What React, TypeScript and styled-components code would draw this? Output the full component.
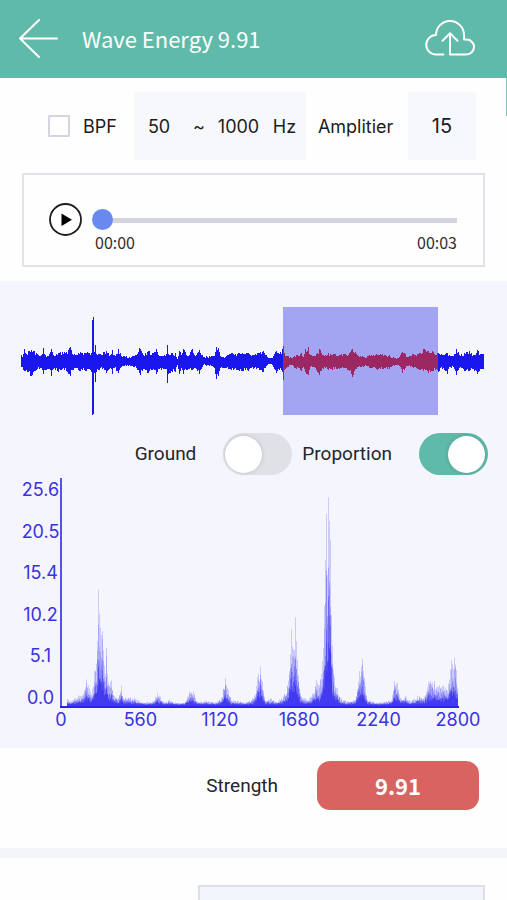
import React from "react";
import styled, { createGlobalStyle } from "styled-components";

const uiFont = `Inter, "Liberation Sans", sans-serif`;
const labelFont = `Roboto, "Liberation Sans", sans-serif`;
const titleFont = `"Noto Sans CJK SC", "Noto Sans", sans-serif`;

const GlobalStyle = createGlobalStyle`
  *, *::before, *::after { box-sizing: border-box; }
  body { margin: 0; background: #fefefe; color: #1c1c20; font-family: ${uiFont}; }
  input, button { font: inherit; color: inherit; margin: 0; }
`;

const Page = styled.div`
  position: relative;
  display: flex;
  flex-direction: column;
  min-height: 100vh;
`;

const Header = styled.header`
  display: flex;
  align-items: center;
  height: 78px;
  padding: 0 32px 0 19px;
  background: #5fbaa9;
  color: #fff;
`;

const IconButton = styled.button`
  display: flex;
  padding: 0;
  border: 0;
  background: none;
  cursor: pointer;
`;

const Title = styled.h1`
  flex: 1;
  margin: 0 0 2px 24px;
  font: 400 22px/32px ${titleFont};
`;

const ScrollMark = styled.div`
  position: absolute;
  top: 78px;
  right: 0;
  width: 1px;
  height: 38px;
  background: #7cc9b9;
`;

const Panel = styled.section<{ $tinted?: boolean }>`
  background: ${(p) => (p.$tinted ? "#f4f5fd" : "#fefefe")};
`;

const FilterRow = styled.div`
  display: flex;
  align-items: center;
  padding: 14px 31px 13px 48px;
  font-size: 18px;
`;

const CheckLabel = styled.label`
  display: flex;
  align-items: center;
  gap: 13px;
`;

const CheckBox = styled.input`
  appearance: none;
  width: 22px;
  height: 22px;
  border: 2px solid #d6d4e0;
  border-radius: 1px;
  background: #fff;
  &:checked { background: #5fbaa9; }
`;

const RangeBox = styled.div`
  display: flex;
  align-items: center;
  width: 172px;
  height: 68px;
  margin-left: 17px;
  padding: 0 10px 0 14px;
  background: #f6f8fc;
`;

const NumberField = styled.input<{ $width: number }>`
  width: ${(p) => p.$width}px;
  padding: 0;
  border: 0;
  outline: 0;
  background: none;
`;

const Unit = styled.span<{ $gap: number }>`
  margin-right: ${(p) => p.$gap}px;
`;

const AmpLabel = styled.label`
  margin-left: 12px;
`;

const AmpField = styled.input`
  width: 68px;
  height: 68px;
  margin-left: auto;
  padding: 0;
  border: 0;
  background: #f6f8fc;
  text-align: center;
  && { font-size: 20px; }
`;

const PlayerWrap = styled.div`
  padding: 0 22px 14px;
`;

const Player = styled.div`
  display: flex;
  align-items: flex-start;
  gap: 10px;
  height: 94px;
  padding: 28px 26px 0 25px;
  border: 2px solid #e2e3e9;
`;

const Track = styled.div`
  flex: 1;
  min-width: 0;
`;

const Slider = styled.input`
  appearance: none;
  display: block;
  width: 100%;
  height: 21px;
  margin-top: 6px !important;
  background: linear-gradient(#d3d4e0, #d3d4e0) center / 100% 5px no-repeat;
  background-position: 10px 9px;
  &::-webkit-slider-thumb {
    appearance: none;
    width: 21px;
    height: 21px;
    border-radius: 50%;
    background: #6989f1;
  }
`;

const Times = styled.div`
  display: flex;
  justify-content: space-between;
  padding-left: 3px;
  color: #2e2e32;
  font: 400 16px/24px ${titleFont};
`;

const WaveWrap = styled.div`
  padding: 26px 22px 0 21px;
`;

const WaveSvg = styled.svg`
  display: block;
  width: 100%;
  height: 108px;
`;

const SwitchRow = styled.div`
  display: flex;
  justify-content: flex-end;
  gap: 10px;
  padding: 18px 19px 0;
`;

const SwitchLabel = styled.label`
  display: flex;
  align-items: center;
  gap: 27px;
  color: #25252a;
  font: 400 19px/42px ${labelFont};
`;

const Switch = styled.input`
  appearance: none;
  display: flex;
  align-items: center;
  width: 69px;
  height: 42px;
  padding: 0 3px 0 2px;
  border-radius: 21px;
  background: #e0e1e6;
  cursor: pointer;
  &::before {
    content: "";
    width: 37px;
    height: 37px;
    border-radius: 50%;
    background: #fff;
    box-shadow: 0 0 4px rgba(0, 0, 0, 0.16);
  }
  &:checked { justify-content: flex-end; background: #5fbaa9; }
`;

const Chart = styled.figure`
  display: grid;
  grid-template-columns: 39px 1fr;
  margin: 0;
  padding: 3px 48px 18px 21px;
  color: #3a32dc;
  font-size: 18px;
`;

const YLabels = styled.div`
  display: flex;
  flex-direction: column;
  align-items: center;
  justify-content: space-between;
  height: 230px;
  padding-top: 2px;
  line-height: 20px;
`;

const PlotSvg = styled.svg`
  display: block;
  width: 100%;
  height: 230px;
`;

const XLabels = styled.div`
  grid-column: 2;
  display: flex;
  justify-content: space-between;
  height: 22px;
  line-height: 24px;
`;

const Tick = styled.span`
  display: flex;
  justify-content: center;
  width: 2px;
`;

const StrengthRow = styled.div`
  display: flex;
  align-items: center;
  justify-content: flex-end;
  gap: 39px;
  padding: 13px 28px 38px;
`;

const StrengthLabel = styled.span`
  color: #25252a;
  font: 400 19px/24px ${labelFont};
`;

const StrengthValue = styled.output`
  width: 162px;
  border-radius: 13px;
  background: #d86361;
  color: #fff;
  text-align: center;
  font: 700 22px/49px ${titleFont};
`;

const Divider = styled.div`
  height: 10px;
  background: #f4f5fb;
`;

const Footer = styled(Panel)`
  display: flex;
  flex: 1;
  padding: 27px 22px 0 198px;
`;

const FooterBox = styled.div`
  flex: 1;
  border: 2px solid #dedfe8;
  border-bottom: 0;
  background: #f3f5fd;
`;

function makeRandom(seed: number) {
  let s = seed;
  return () => {
    s = (s * 16807) % 2147483647;
    return s / 2147483647;
  };
}

/* [time, rise above the centre line, fall below it] */
const WAVE: number[][] = [
  [0, 6, 5], [2, 7, 8], [3, 12, 9], [4, 8, 9], [7, 10, 10], [10, 11, 14], [12, 10, 10], [15, 8, 8], [20, 6, 6],
  [22, 13, 12], [24, 6, 8], [28, 7, 7], [30, 12, 14], [32, 6, 7], [37, 8, 10], [41, 9, 7], [45, 9, 9], [49, 14, 14],
  [51, 7, 8], [54, 6, 6], [59, 9, 9], [64, 8, 9], [68, 8, 7], [70, 8, 10], [71, 41, 54], [72, 44, 52], [73, 9, 11],
  [74, 16, 20], [75, 7, 10], [79, 7, 6], [85, 10, 11], [89, 6, 6], [91, 11, 12], [93, 6, 6], [97, 12, 11], [100, 5, 5],
  [105, 5, 4], [109, 3, 4], [112, 5, 5], [116, 7, 8], [118, 13, 11], [119, 12, 13], [122, 6, 7], [127, 10, 11],
  [131, 8, 8], [135, 12, 12], [137, 6, 7], [143, 6, 7], [145, 7, 7], [146, 16, 21], [147, 7, 12], [151, 8, 10],
  [154, 8, 10], [156, 2, 3], [158, 10, 12], [160, 6, 6], [162, 12, 12], [166, 5, 8], [171, 12, 8], [174, 5, 6],
  [178, 11, 12], [182, 4, 3], [188, 5, 4], [193, 5, 6], [195, 14, 17], [197, 13, 14], [199, 5, 6], [205, 5, 6],
  [210, 8, 8], [216, 7, 8], [221, 8, 9], [227, 8, 9], [233, 6, 6], [238, 8, 8], [242, 10, 10], [247, 3, 2],
  [251, 3, 3], [255, 10, 11], [258, 7, 8], [261, 12, 10], [262, 15, 18], [263, 8, 8], [266, 5, 5], [270, 3, 3],
  [275, 6, 7], [280, 8, 9], [282, 4, 5], [284, 12, 10], [287, 14, 13], [289, 6, 5], [294, 5, 6], [298, 12, 13],
  [300, 8, 9], [303, 5, 5], [307, 8, 8], [313, 7, 7], [318, 6, 7], [323, 7, 6], [328, 8, 9], [331, 12, 15],
  [335, 7, 7], [339, 5, 5], [343, 4, 4], [348, 6, 6], [355, 7, 7], [361, 7, 7], [368, 6, 7], [373, 3, 4],
  [377, 3, 3], [381, 9, 11], [383, 8, 8], [386, 4, 4], [392, 7, 6], [399, 8, 8], [402, 12, 9], [407, 10, 11],
  [411, 10, 9], [414, 6, 8], [417, 8, 10], [422, 6, 6], [426, 8, 12], [429, 5, 5], [433, 7, 7], [435, 12, 13],
  [438, 6, 6], [443, 8, 9], [448, 10, 9], [452, 6, 7], [456, 11, 12], [459, 7, 7], [463, 7, 7],
];

/* [position along the axis, magnitude] */
const SPECTRUM: number[][] = [
  [0, 0], [6, 0], [7, 7], [10, 4], [18, 10], [22, 10], [26, 26], [28, 20], [31, 11], [34, 34], [36, 42], [38, 116],
  [39, 92], [40, 78], [42, 74], [44, 40], [46, 58], [48, 22], [51, 25], [54, 10], [58, 8], [61, 20], [63, 8],
  [74, 8], [78, 5], [86, 3], [92, 4], [97, 12], [100, 9], [104, 3], [109, 6], [114, 3], [124, 3], [129, 14],
  [133, 14], [137, 4], [145, 5], [155, 3], [161, 8], [165, 27], [168, 16], [171, 5], [178, 5], [185, 3], [192, 7],
  [194, 10], [197, 28], [200, 39], [202, 24], [205, 5], [211, 7], [216, 4], [223, 9], [228, 25], [231, 76],
  [233, 56], [235, 88], [237, 45], [240, 12], [246, 6], [251, 9], [256, 26], [259, 20], [262, 45], [264, 100],
  [266, 192], [267, 130], [268, 208], [270, 165], [271, 90], [272, 60], [274, 28], [277, 18], [280, 8], [286, 4],
  [295, 6], [299, 35], [302, 47], [304, 28], [307, 6], [316, 3], [326, 4], [331, 6], [334, 24], [337, 23],
  [340, 8], [345, 10], [350, 4], [357, 10], [364, 9], [368, 24], [374, 24], [379, 20], [383, 20], [388, 22],
  [391, 45], [394, 47], [396, 35], [398, 15],
];

function sample(data: number[][], x: number, column: number) {
  let i = 0;
  while (i < data.length - 2 && data[i + 1][0] < x) i++;
  const a = data[i];
  const b = data[i + 1];
  const t = Math.min(1, Math.max(0, (x - a[0]) / (b[0] - a[0])));
  return a[column] + (b[column] - a[column]) * t;
}

function wavePath() {
  const random = makeRandom(77);
  const centre = 54;
  const peaks = new Set(WAVE.map((p) => p[0]));
  let d = "";
  for (let x = 0; x < 463; x++) {
    const jitter = () => (peaks.has(x) ? 1 : 0.68 + random() * 0.4);
    const up = Math.round(sample(WAVE, x, 1) * jitter());
    const down = Math.round(sample(WAVE, x, 2) * jitter());
    d += `M${x} ${centre - up}h1V${centre + down + 1}h-1z`;
  }
  return d;
}

function spectrumPaths() {
  const random = makeRandom(4242);
  const peaks = new Set(SPECTRUM.map((p) => p[0]));
  const layers = [1, 0.85, 0.65, 0.5, 0.4, 0.3];
  return layers.map((scale, layer) => {
    let d = "";
    for (let x = 7; x < 398; x++) {
      const noise = layer === 0 ? (peaks.has(x) ? 1 : 0.6 + random() * 0.4) : 0.5 + random() * 0.6;
      const h = sample(SPECTRUM, x, 1) * scale * noise + 1 + random();
      d += `M${x} 229v${(-h).toFixed(1)}h1V229z`;
    }
    return d;
  });
}

const wave = wavePath();
const layers = spectrumPaths();
const layerOpacity = [0.2, 0.2, 0.26, 0.32, 0.36, 0.42];

function BackIcon() {
  return (
    <svg width="39" height="40" viewBox="0 0 39 40" fill="none" stroke="#fff" strokeWidth="2" strokeLinecap="round" strokeLinejoin="round">
      <path d="M20 1L1 19.500l19 18.500M1 19.500h37" />
    </svg>
  );
}

function CloudUploadIcon() {
  return (
    <svg width="50" height="40" viewBox="0 0 50 40" fill="none" stroke="#fff" strokeWidth="2" strokeLinecap="round" strokeLinejoin="round">
      <path d="M18.500 35.500H11A9.750 9.750 0 0 1 11 16A14 14 0 0 1 39 16V20.500H41.500A7.500 7.500 0 0 1 41.500 35.500H25V14.500M17.500 21.700L25 14.300l7.500 7.400" />
    </svg>
  );
}

function PlayIcon() {
  return (
    <svg width="33" height="33" viewBox="0 0 33 33">
      <circle cx="16.500" cy="16.500" r="15.500" fill="#fff" stroke="#1d1d20" strokeWidth="1.800" />
      <path d="M12.500 10.500v12.500l10.500-6.250z" fill="#000" />
    </svg>
  );
}

export default function App() {
  return (
    <>
      <GlobalStyle />
      <Page>
        <Header>
          <IconButton aria-label="Back"><BackIcon /></IconButton>
          <Title>Wave Energy 9.91</Title>
          <IconButton aria-label="Upload"><CloudUploadIcon /></IconButton>
        </Header>
        <ScrollMark />
        <Panel>
          <FilterRow>
            <CheckLabel><CheckBox type="checkbox" />BPF</CheckLabel>
            <RangeBox>
              <NumberField $width={45} defaultValue="50" aria-label="Lowest frequency" />
              <Unit $gap={13}>~</Unit>
              <NumberField $width={55} defaultValue="1000" aria-label="Highest frequency" />
              <Unit $gap={0}>Hz</Unit>
            </RangeBox>
            <AmpLabel htmlFor="amp">Amplitier</AmpLabel>
            <AmpField id="amp" defaultValue="15" />
          </FilterRow>
          <PlayerWrap>
            <Player>
              <IconButton aria-label="Play"><PlayIcon /></IconButton>
              <Track>
                <Slider type="range" min={0} max={3} defaultValue={0} aria-label="Position" />
                <Times><span>00:00</span><span>00:03</span></Times>
              </Track>
            </Player>
          </PlayerWrap>
        </Panel>
        <Panel $tinted>
          <WaveWrap>
            <WaveSvg viewBox="0 0 464 108" preserveAspectRatio="none" role="img" aria-label="Waveform">
              <defs>
                <clipPath id="selection"><rect x="262" width="155" height="108" /></clipPath>
              </defs>
              <rect x="262" width="155" height="108" fill="#a3a5f3" />
              <path d={wave} fill="#1a17ee" />
              <path d={wave} fill="#9b2862" clipPath="url(#selection)" />
            </WaveSvg>
          </WaveWrap>
          <SwitchRow>
            <SwitchLabel>Ground<Switch type="checkbox" role="switch" /></SwitchLabel>
            <SwitchLabel>Proportion<Switch type="checkbox" role="switch" defaultChecked /></SwitchLabel>
          </SwitchRow>
          <Chart>
            <YLabels>
              {["25.6", "20.5", "15.4", "10.2", "5.1", "0.0"].map((v) => <span key={v}>{v}</span>)}
            </YLabels>
            <PlotSvg viewBox="0 0 399 230" preserveAspectRatio="none" role="img" aria-label="Spectrum">
              {layers.map((d, i) => <path key={i} d={d} fill="#2a22ee" fillOpacity={layerOpacity[i]} />)}
              <path d="M0 0h2v230h-2z" fill="#5850ee" />
              <path d="M0 228h399v2H0z" fill="#2a22ee" />
            </PlotSvg>
            <XLabels>
              {["0", "560", "1120", "1680", "2240", "2800"].map((v) => <Tick key={v}>{v}</Tick>)}
            </XLabels>
          </Chart>
        </Panel>
        <Panel>
          <StrengthRow>
            <StrengthLabel>Strength</StrengthLabel>
            <StrengthValue>9.91</StrengthValue>
          </StrengthRow>
        </Panel>
        <Divider />
        <Footer><FooterBox /></Footer>
      </Page>
    </>
  );
}
